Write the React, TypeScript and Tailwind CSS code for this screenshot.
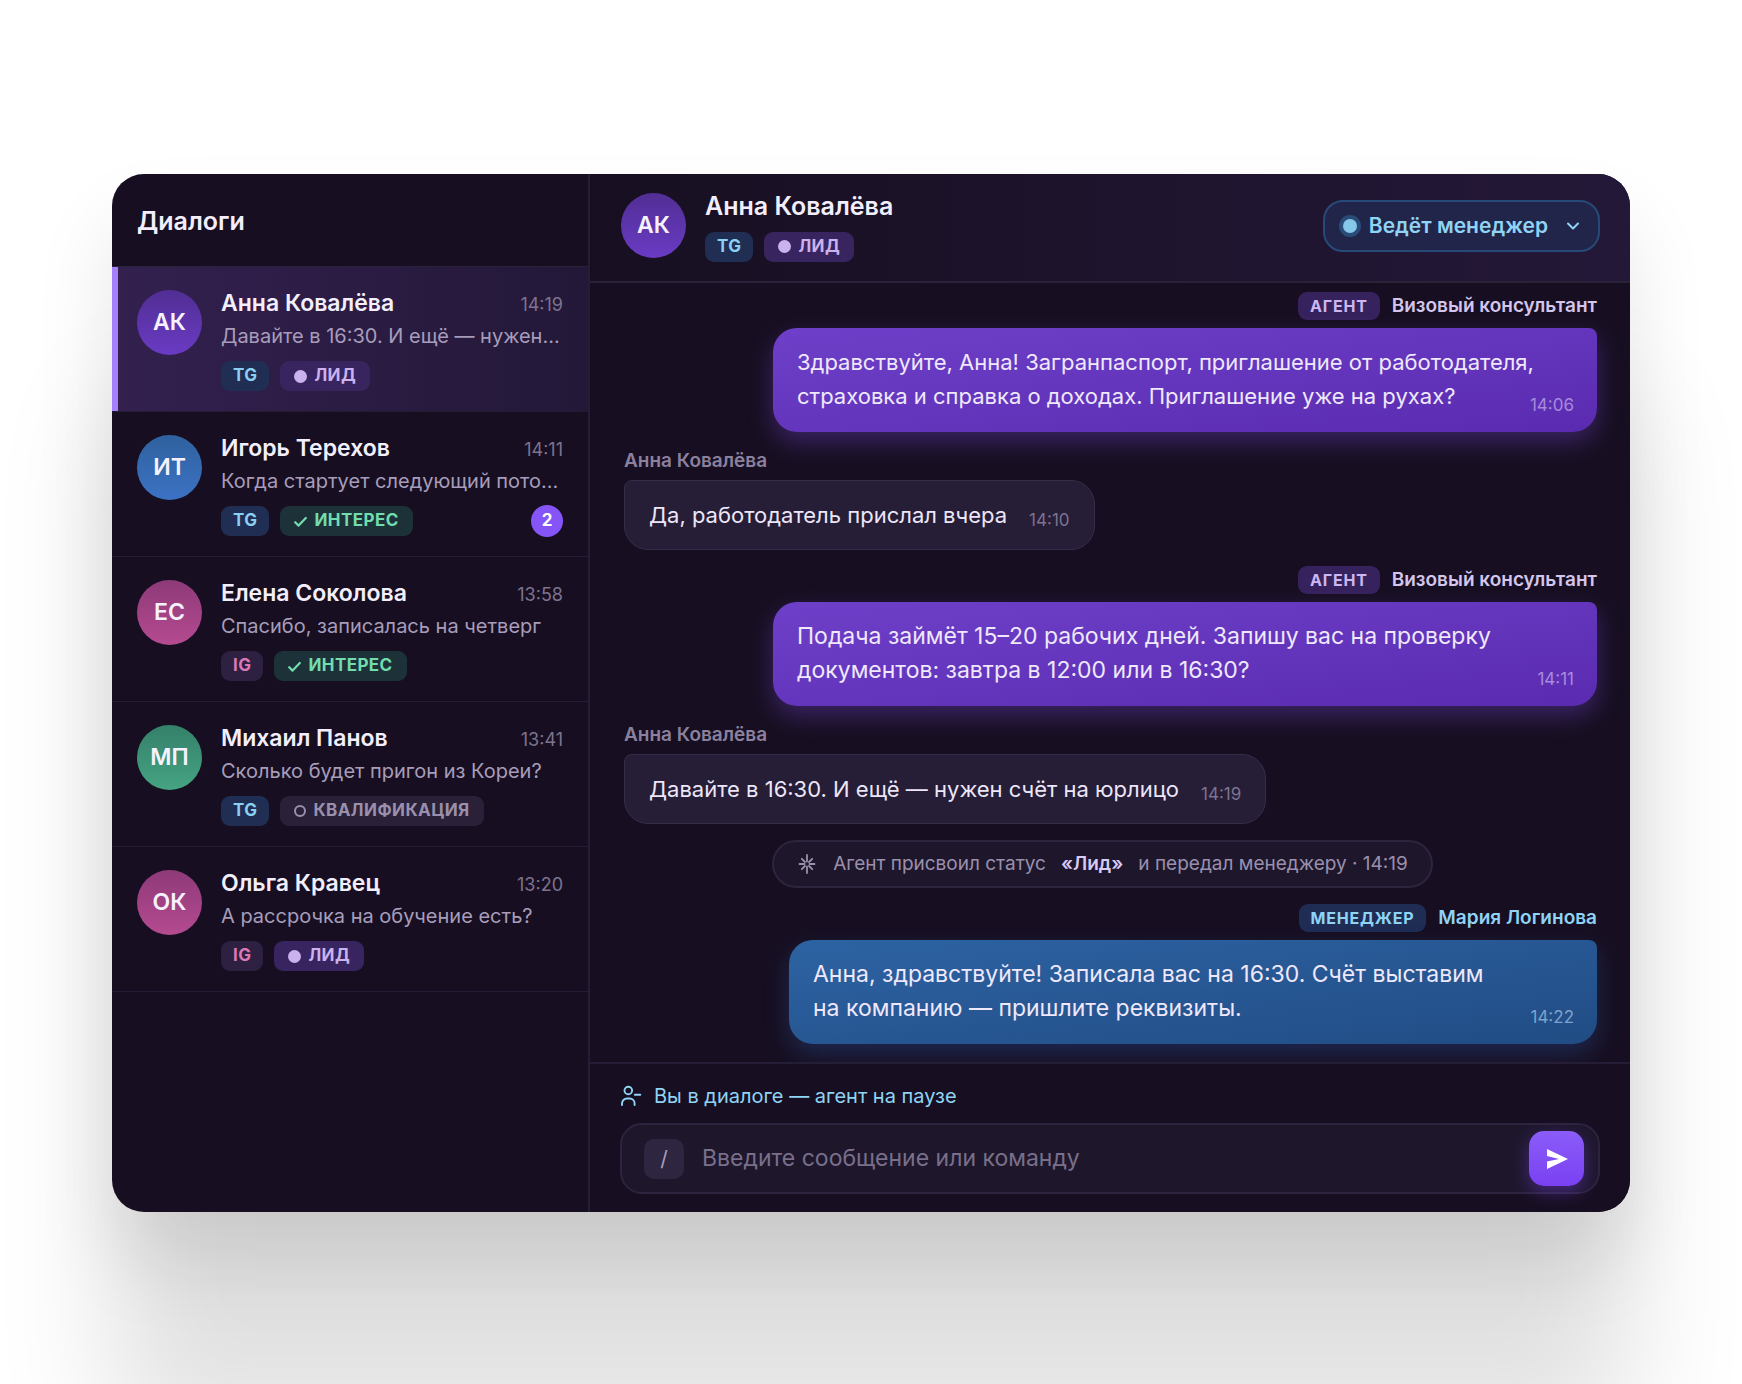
import { useState } from "react";

type Chat = {
  initials: string;
  name: string;
  time: string;
  preview: string;
  channel: "TG" | "IG";
  status: "lead" | "interest" | "qualify";
  color: string;
  unread?: number;
};

const chats: Chat[] = [
  { initials: "АК", name: "Анна Ковалёва", time: "14:19", preview: "Давайте в 16:30. И ещё — нужен...", channel: "TG", status: "lead", color: "from-[#512e94] to-[#6a3bc4]" },
  { initials: "ИТ", name: "Игорь Терехов", time: "14:11", preview: "Когда стартует следующий пото...", channel: "TG", status: "interest", color: "from-[#2f619e] to-[#3c72c4]", unread: 2 },
  { initials: "ЕС", name: "Елена Соколова", time: "13:58", preview: "Спасибо, записалась на четверг", channel: "IG", status: "interest", color: "from-[#8e3a78] to-[#b54a90]" },
  { initials: "МП", name: "Михаил Панов", time: "13:41", preview: "Сколько будет пригон из Кореи?", channel: "TG", status: "qualify", color: "from-[#35806a] to-[#45a482]" },
  { initials: "ОК", name: "Ольга Кравец", time: "13:20", preview: "А рассрочка на обучение есть?", channel: "IG", status: "lead", color: "from-[#8e3a78] to-[#b54a90]" },
];

function Avatar({ initials, color }: { initials: string; color: string }) {
  return (
    <div className={`flex size-[65px] shrink-0 items-center justify-center rounded-full bg-linear-to-b text-[23px] font-semibold text-[#f6f2fd] ${color}`}>
      {initials}
    </div>
  );
}

function ChannelTag({ channel }: { channel: "TG" | "IG" }) {
  return (
    <span
      className={`flex h-[30px] items-center rounded-[9px] px-3 text-[17px] font-bold tracking-wide ${
        channel === "TG" ? "bg-[#1f2e52] text-[#8ad0f2]" : "bg-[#2d2040] text-[#dc78b8]"
      }`}
    >
      {channel}
    </span>
  );
}

function StatusTag({ status }: { status: Chat["status"] }) {
  const base = "flex h-[30px] items-center gap-[7px] rounded-[9px] px-3.5 text-[17px] font-bold tracking-wide";
  if (status === "lead") {
    return (
      <span className={`${base} bg-[#38245e] text-[#c9b2ee]`}>
        <span className="size-[13px] rounded-full bg-[#c9b2ee]" />
        ЛИД
      </span>
    );
  }
  if (status === "interest") {
    return (
      <span className={`${base} bg-[#1c3238] text-[#72dcae]`}>
        <svg width="13" height="13" viewBox="0 0 13 13" fill="none" stroke="currentColor" strokeWidth="2.2" strokeLinecap="round" strokeLinejoin="round">
          <path d="M1.2 7.2 4.6 10.6 11.8 3" />
        </svg>
        ИНТЕРЕС
      </span>
    );
  }
  return (
    <span className={`${base} bg-[#2a2139] text-[#9a90ad]`}>
      <span className="size-3 rounded-full border-2 border-[#9a90ad]" />
      КВАЛИФИКАЦИЯ
    </span>
  );
}

function ChatItem({ chat, active }: { chat: Chat; active: boolean }) {
  return (
    <li
      className={`relative flex gap-[19px] border-b border-[#241c34] px-[25px] pt-[23px] pb-5 ${
        active ? "bg-linear-to-r from-[#33204f] to-[#231838]" : ""
      }`}
    >
      {active && <span className="absolute inset-y-0 left-0 w-1.5 bg-[#a680fb]" />}
      <Avatar initials={chat.initials} color={chat.color} />
      <div className="min-w-0 flex-1">
        <div className="flex items-baseline justify-between leading-[26px]">
          <h3 className="text-[23px] font-semibold text-[#f3eefc]">{chat.name}</h3>
          <time className="text-[18px] leading-5 text-[#7d738f]">{chat.time}</time>
        </div>
        <p className="mt-[3px] text-[20px] leading-[34px] whitespace-nowrap text-[#a79dbb]">{chat.preview}</p>
        <div className="mt-2 flex h-[30px] items-center gap-[11px]">
          <ChannelTag channel={chat.channel} />
          <StatusTag status={chat.status} />
          {chat.unread && (
            <span className="ml-auto flex size-8 items-center justify-center rounded-full bg-[#8655f8] text-[17px] font-bold text-white">
              {chat.unread}
            </span>
          )}
        </div>
      </div>
    </li>
  );
}

type AgentMessageProps = {
  role: string;
  author: string;
  time: string;
  manager?: boolean;
  dense?: boolean;
  children: React.ReactNode;
};

function AgentMessage({ role, author, time, manager, dense, children }: AgentMessageProps) {
  return (
    <div className="flex flex-col items-end gap-2">
      <div className="flex h-7 items-center gap-3 text-[19px] font-semibold">
        <span
          className={`flex h-7 items-center rounded-[9px] px-3 text-[16px] font-bold tracking-wider ${
            manager ? "bg-[#1f2c54] text-[#8fd3f5]" : "bg-[#36225c] text-[#cdb6f2]"
          }`}
        >
          {role}
        </span>
        <span className={manager ? "text-[#8fd3f5]" : "text-[#d3c5ec]"}>{author}</span>
      </div>
      <div
        className={`flex items-end justify-between rounded-3xl rounded-tr-lg pt-[17px] pr-[23px] pb-[19px] pl-6 ${
          manager
            ? "w-202 bg-linear-to-br from-[#2d63a3] to-[#214c84] shadow-[0_10px_24px_rgba(45,99,190,0.3)]"
            : "w-206 bg-linear-to-br from-[#6e40c9] to-[#5a2bb0] shadow-[0_10px_24px_rgba(110,64,201,0.4)]"
        }`}
      >
        <p className={`min-w-0 leading-[34px] whitespace-nowrap text-[#efe8fb] ${dense ? "text-[22px]" : "text-[23px]"}`}>{children}</p>
        <time className={`text-[17px] leading-4 ${manager ? "text-[#7ba3cd]" : "text-[#a78bdc]"}`}>{time}</time>
      </div>
    </div>
  );
}

function ClientMessage({ time, children }: { time: string; children: React.ReactNode }) {
  return (
    <div className="flex flex-col items-start gap-1.5">
      <span className="text-[19px] leading-[26px] font-semibold text-[#8b819e]">Анна Ковалёва</span>
      <div className="flex items-end gap-[22px] rounded-3xl rounded-tl-lg border border-[#372d4a] bg-[#261d37] px-6 py-[17px]">
        <p className="text-[22px] leading-[34px] text-[#ece6f8]">{children}</p>
        <time className="text-[17px] leading-6 text-[#7d738f]">{time}</time>
      </div>
    </div>
  );
}

export default function App() {
  const [message, setMessage] = useState("");

  return (
    <div className="min-h-screen overflow-hidden bg-white px-28 pt-[174px] pb-[172px] font-['Inter',sans-serif]">
      <div className="flex overflow-hidden rounded-4xl bg-[#170f21] shadow-[0_50px_80px_rgba(0,0,0,0.1),0_220px_120px_rgba(0,0,0,0.12)]">
        {/* Sidebar */}
        <aside className="w-[478px] shrink-0 border-r-2 border-[#251c35]">
          <div className="flex h-[93px] items-center border-b border-[#2a2239] px-[25px] pt-[3px]">
            <h2 className="text-[25px] font-semibold text-[#f3eefc]">Диалоги</h2>
          </div>
          <ul>
            {chats.map((chat, index) => (
              <ChatItem key={chat.name} chat={chat} active={index === 0} />
            ))}
          </ul>
        </aside>

        {/* Conversation */}
        <main className="min-w-0 flex-1">
          <header className="flex h-[109px] items-center justify-between border-b-2 border-[#2a2239] bg-linear-to-r from-[#170f21] to-[#241838] pr-[30px] pb-1 pl-[31px]">
            <div className="flex items-center gap-[19px]">
              <Avatar initials="АК" color="from-[#512e94] to-[#6a3bc4]" />
              <div>
                <h1 className="text-[25px] leading-8 font-semibold text-[#f3eefc]">Анна Ковалёва</h1>
                <div className="mt-2.5 flex gap-[11px]">
                  <ChannelTag channel="TG" />
                  <StatusTag status="lead" />
                </div>
              </div>
            </div>
            <button className="flex h-[52px] items-center rounded-[20px] border-2 border-[#264a78] bg-[#22254a] pr-[18px] pl-[18px] text-[21px] font-semibold text-[#8fd3f5]">
              <span className="mr-3 size-[14px] rounded-full bg-[#86c8ea] ring-4 ring-[#2a4a78]" />
              Ведёт менеджер
              <svg className="ml-[18px]" width="14" height="14" viewBox="0 0 14 14" fill="none" stroke="currentColor" strokeWidth="2" strokeLinecap="round" strokeLinejoin="round">
                <path d="M2 4.5 7 9.5 12 4.5" />
              </svg>
            </button>
          </header>

          <section className="flex flex-col gap-4 pt-[9px] pr-[33px] pb-[18px] pl-[34px]">
            <AgentMessage role="АГЕНТ" author="Визовый консультант" time="14:06" dense>
              Здравствуйте, Анна! Загранпаспорт, приглашение от работодателя,
              <br />
              страховка и справка о доходах. Приглашение уже на рухах?
            </AgentMessage>
            <ClientMessage time="14:10">Да, работодатель прислал вчера</ClientMessage>
            <AgentMessage role="АГЕНТ" author="Визовый консультант" time="14:11">
              Подача займёт 15–20 рабочих дней. Запишу вас на проверку
              <br />
              документов: завтра в 12:00 или в 16:30?
            </AgentMessage>
            <ClientMessage time="14:19">Давайте в 16:30. И ещё — нужен счёт на юрлицо</ClientMessage>

            <div className="mr-4 flex h-12 items-center self-center rounded-full border-2 border-[#2d243d] bg-[#1e172c] px-[23px] text-[19px] text-[#9a90ad]">
              <svg className="mr-4" width="20" height="20" viewBox="0 0 20 20" stroke="currentColor" strokeWidth="1.8" strokeLinecap="round">
                <path d="M10 .9v6.600M10 12.500v6.600M2.500 10h5M12.500 10h5M4.800 4.800 8 8M12 12l3.200 3.200M15.200 4.800 12 8M8 12l-3.200 3.200" />
              </svg>
              Агент присвоил статус
              <b className="mx-[15px] font-semibold text-[#d9c9f5]">«Лид»</b>
              и передал менеджеру · 14:19
            </div>

            <AgentMessage role="МЕНЕДЖЕР" author="Мария Логинова" time="14:22" manager>
              Анна, здравствуйте! Записала вас на 16:30. Счёт выставим
              <br />
              на компанию — пришлите реквизиты.
            </AgentMessage>
          </section>

          <footer className="relative border-t-2 border-[#251c35] bg-[#170f21] pt-5 pr-[30px] pb-[18px] pl-[30px]">
            <p className="flex items-center gap-3 text-[20px] leading-6 text-[#8fd3f5]">
              <svg width="22" height="22" viewBox="0 0 22 22" fill="none" stroke="currentColor" strokeWidth="1.9" strokeLinecap="round">
                <circle cx="8.3" cy="5.5" r="3.8" />
                <path d="M2 20v-1.500a5 5 0 0 1 5-5h2.600a5 5 0 0 1 5 5V20M14.800 9.800h5.500" />
              </svg>
              Вы в диалоге — агент на паузе
            </p>
            <form className="mt-[15px] flex h-[71px] items-center rounded-[22px] border-2 border-[#2d243d] bg-[#1e172c] pr-[14px] pl-[22px]">
              <kbd className="flex size-10 items-center justify-center rounded-[10px] bg-[#2e2540] font-['Inter',sans-serif] text-[21px] text-[#a79dbb]">/</kbd>
              <input
                type="text"
                aria-label="Сообщение"
                placeholder="Введите сообщение или команду"
                value={message}
                onChange={(e) => setMessage(e.target.value)}
                className="ml-[18px] min-w-0 flex-1 bg-transparent text-[23px] text-[#ece6f8] outline-none placeholder:text-[#796f8b]"
              />
              <button
                type="button"
                aria-label="Отправить"
                className="flex size-[55px] items-center justify-center rounded-[15px] bg-linear-to-b from-[#8b5cf8] to-[#7a40f2] text-white shadow-[0_6px_18px_rgba(124,66,245,0.4)]"
              >
                <svg width="22" height="20" viewBox="0 0 22 20" fill="currentColor">
                  <path d="M1 0 22 10 1 20V12.500L13 10 1 7Z" />
                </svg>
              </button>
            </form>
          </footer>
        </main>
      </div>
    </div>
  );
}
